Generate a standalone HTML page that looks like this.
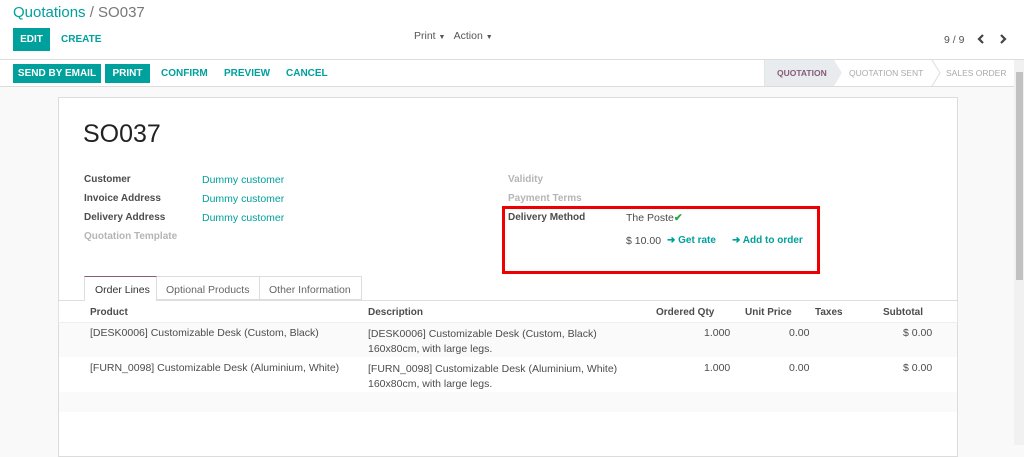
<!DOCTYPE html>
<html><head><meta charset="utf-8"><style>
*{margin:0;padding:0;box-sizing:border-box}
body{width:1024px;height:445px;overflow:hidden;background:#f9f9f9;font-family:"Liberation Sans",sans-serif;color:#4c4c4c;position:relative;font-size:10.5px}
.a{position:absolute;white-space:nowrap}
.t{color:#00a09d}
.btn{position:absolute;background:#00a09d;color:#fff;font-weight:bold;font-size:10px;text-align:center;line-height:19px;height:19px}
.lb{font-weight:bold;color:#4c4c4c;font-size:10px}
.th{font-weight:bold;font-size:10px;color:#4c4c4c}
</style></head><body>
<div class="a" style="left:0;top:0;width:1024px;height:60px;background:#fff;border-bottom:1px solid #dcdcdc"></div>
<div class="a" style="left:13px;top:4px;font-size:15px"><span class="t">Quotations</span><span style="color:#777"> / SO037</span></div>
<div class="btn" style="left:13px;top:28px;width:37px;height:23px;line-height:23px">EDIT</div>
<div class="a t" style="left:61px;top:34px;font-weight:bold;font-size:10px">CREATE</div>
<div class="a" style="left:414px;top:30px;font-size:10.5px;color:#555">Print <span style="font-size:7px">▼</span>&nbsp;&nbsp; Action <span style="font-size:7px">▼</span></div>
<div class="a" style="left:944px;top:34px;font-size:10.5px;color:#555">9 / 9</div>
<svg class="a" style="left:975px;top:33px" width="40" height="12"><polyline points="8,2 4,6 8,10" fill="none" stroke="#444" stroke-width="2.2"/><polyline points="26,2 30,6 26,10" fill="none" stroke="#444" stroke-width="2.2"/></svg>
<div class="a" style="left:0;top:60px;width:1014px;height:27px;background:#fff;border-bottom:1px solid #dcdcdc"></div>
<div class="btn" style="left:13px;top:64px;width:88px">SEND BY EMAIL</div>
<div class="btn" style="left:105px;top:64px;width:45px">PRINT</div>
<div class="a t" style="left:161px;top:68px;font-weight:bold;font-size:10px">CONFIRM</div>
<div class="a t" style="left:224px;top:68px;font-weight:bold;font-size:10px">PREVIEW</div>
<div class="a t" style="left:286px;top:68px;font-weight:bold;font-size:10px">CANCEL</div>
<div class="a" style="left:764px;top:60px;width:70px;height:26px;background:#e9ecef"></div>
<svg class="a" style="left:764px;top:60px" width="250" height="27"><polygon points="70,0 78,13 70,26" fill="#e9ecef"/><polyline points="168,0 176,13 168,26" fill="none" stroke="#ddd"/><line x1="0" y1="0" x2="0" y2="27" stroke="#ddd"/></svg>
<div class="a" style="left:777px;top:68px;font-weight:bold;font-size:8.5px;color:#875a7b">QUOTATION</div>
<div class="a" style="left:849px;top:68px;font-size:8.5px;color:#aaa">QUOTATION SENT</div>
<div class="a" style="left:946px;top:68px;font-size:8.5px;color:#aaa">SALES ORDER</div>
<div class="a" style="left:1014px;top:60px;width:10px;height:385px;background:#f1f1f1"></div>
<div class="a" style="left:1016px;top:72px;width:7px;height:208px;background:#c1c1c1"></div>
<div class="a" style="left:58px;top:97px;width:900px;height:360px;background:#fff;border:1px solid #dcdcdc"></div>
<div class="a" style="left:83px;top:120px;font-size:25px;color:#222">SO037</div>
<div class="a lb" style="left:84px;top:174px">Customer</div>
<div class="a lb" style="left:84px;top:193px">Invoice Address</div>
<div class="a lb" style="left:84px;top:212px">Delivery Address</div>
<div class="a lb" style="left:84px;top:231px;color:#b5b5b5">Quotation Template</div>
<div class="a t" style="left:202px;top:174px">Dummy customer</div>
<div class="a t" style="left:202px;top:193px">Dummy customer</div>
<div class="a t" style="left:202px;top:212px">Dummy customer</div>
<div class="a lb" style="left:508px;top:174px;color:#b5b5b5">Validity</div>
<div class="a lb" style="left:508px;top:193px;color:#b5b5b5">Payment Terms</div>
<div class="a lb" style="left:508px;top:212px">Delivery Method</div>
<div class="a" style="left:626px;top:212px">The Poste<span style="color:#28a745;font-weight:bold">✔</span></div>
<div class="a" style="left:626px;top:235px">$ 10.00</div>
<div class="a t" style="left:667px;top:235px;font-weight:bold;font-size:10px">➜ Get rate</div>
<div class="a t" style="left:732px;top:235px;font-weight:bold;font-size:10px">➜ Add to order</div>
<div class="a" style="left:502px;top:206px;width:318px;height:68px;border:3px solid #ee0000"></div>
<div class="a" style="left:59px;top:300px;width:898px;border-top:1px solid #dcdcdc"></div>
<div class="a" style="left:84px;top:276px;width:73px;height:25px;background:#fff;border:1px solid #ddd;border-top:1px solid #875a7b;border-bottom:none;padding:7px 0 0 10px;color:#333">Order Lines</div>
<div class="a" style="left:157px;top:276px;width:103px;height:24px;border:1px solid #ddd;border-left:none;padding:7px 0 0 9px;color:#666">Optional Products</div>
<div class="a" style="left:260px;top:276px;width:102px;height:24px;border:1px solid #ddd;border-left:none;padding:7px 0 0 9px;color:#666">Other Information</div>
<div class="a" style="left:59px;top:301px;width:898px;height:22px;border-bottom:1px solid #eee;box-shadow:0 1px 2px #eee"></div>
<div class="a th" style="left:90px;top:307px">Product</div>
<div class="a th" style="left:368px;top:307px">Description</div>
<div class="a th" style="left:656px;top:307px">Ordered Qty</div>
<div class="a th" style="left:745px;top:307px">Unit Price</div>
<div class="a th" style="left:815px;top:307px">Taxes</div>
<div class="a th" style="left:883px;top:307px">Subtotal</div>
<div class="a" style="left:59px;top:323px;width:898px;height:34px;background:#fafafa"></div>
<div class="a" style="left:59px;top:392px;width:898px;height:20px;background:#fafafa"></div>
<div class="a" style="left:90px;top:327px">[DESK0006] Customizable Desk (Custom, Black)</div>
<div class="a" style="left:368px;top:327px;line-height:15px">[DESK0006] Customizable Desk (Custom, Black)<br>160x80cm, with large legs.</div>
<div class="a" style="left:704px;top:327px">1.000</div><div class="a" style="left:789px;top:327px">0.00</div><div class="a" style="left:903px;top:327px">$ 0.00</div>
<div class="a" style="left:90px;top:362px">[FURN_0098] Customizable Desk (Aluminium, White)</div>
<div class="a" style="left:368px;top:362px;line-height:15px">[FURN_0098] Customizable Desk (Aluminium, White)<br>160x80cm, with large legs.</div>
<div class="a" style="left:704px;top:362px">1.000</div><div class="a" style="left:789px;top:362px">0.00</div><div class="a" style="left:903px;top:362px">$ 0.00</div>
</body></html>
